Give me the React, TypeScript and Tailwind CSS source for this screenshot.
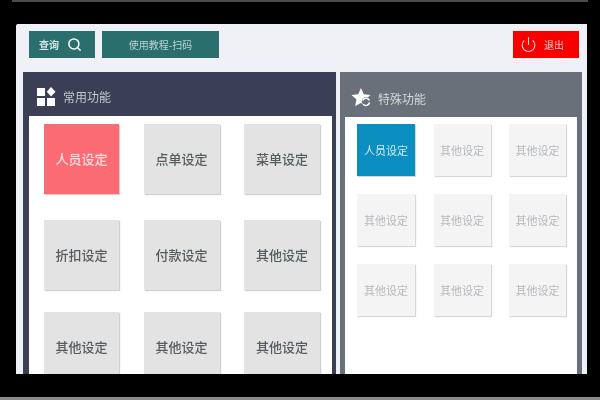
import { Power, Search } from "lucide-react";

const mainItems = ["人员设定", "点单设定", "菜单设定", "折扣设定", "付款设定", "其他设定", "其他设定", "其他设定", "其他设定"];
const specialItems = ["人员设定", "其他设定", "其他设定", "其他设定", "其他设定", "其他设定", "其他设定", "其他设定", "其他设定"];

const font = "font-['Noto_Sans_CJK_SC','Noto_Sans',sans-serif]";

function AppsIcon() {
    return (
        <svg width="19" height="19" viewBox="0 0 19 19" fill="white" className="shrink-0">
            <rect x="0" y="1" width="8" height="8" />
            <rect x="0" y="11" width="8" height="8" />
            <rect x="10" y="11" width="8" height="8" />
            <path d="M14 0l4.500 4.700-4.500 4.700-4.200-4.700z" />
        </svg>
    );
}

function StarIcon() {
    return (
        <svg width="22" height="22" viewBox="0 0 22 22" className="shrink-0">
            <path d="M10 1l2.800 6.200 6.700.7-5 4.500 1.400 6.600L10 16l-5.900 3 1.400-6.600-5-4.500 6.700-.7z" fill="white" />
            <circle cx="15" cy="14.500" r="4.200" fill="#6a7079" />
            <path d="M11.500 13.500a3.800 3.800 0 0 1 7 0M18.500 15.500a3.800 3.800 0 0 1-6.500 1.800" fill="none" stroke="white" strokeWidth="1.500" />
        </svg>
    );
}

export default function App() {
    return (
        <div className={`flex h-[400px] w-[600px] flex-col overflow-hidden bg-black blur-[0.4px] ${font}`}>
            <div className="mx-3 h-0.5 shrink-0 bg-[#4a4a4a]" />
            <div className="flex min-h-0 flex-1 flex-col pl-4 pr-[13px] pt-[22px] pb-[23px]">
                <div className="flex min-h-0 flex-1 flex-col overflow-hidden rounded-tl-[2px] bg-[#f0f1f7]">
                    <div className="flex h-12 shrink-0 items-start gap-[7px] pl-[13px] pr-2 pt-[7px]">
                        <button className="flex h-[27px] w-[66px] items-center gap-2 bg-[#2a6e6e] pl-2.5 text-[10px] font-bold text-[#d5e5e5]">
                            查询
                            <Search size={15} strokeWidth={2.4} className="text-white" />
                        </button>
                        <button className="h-[27px] w-[117px] bg-[#2a6e6e] text-[10px] text-[#b9d3d3]">
                            使用教程-扫码
                        </button>
                        <button className="ml-auto flex h-[27px] w-[66px] items-center gap-[7px] bg-[#f80000] pl-[7px] text-[10px] text-[#ffc9c9]">
                            <Power size={17} strokeWidth={1.5} className="text-[#ffd8d8]" />
                            退出
                        </button>
                    </div>

                    <div className="flex min-h-0 flex-1 gap-1 pl-[7px] pr-[5px]">
                        <section className="flex w-[313px] flex-col bg-[#3a3f55] pl-1.5 pr-1">
                            <div className="flex h-11 shrink-0 items-center gap-[7px] pl-2 pt-1 text-[12px] text-[#c5c8d0]">
                                <AppsIcon />
                                <span className="mt-0.5">常用功能</span>
                            </div>
                            <div className="min-h-0 flex-1 overflow-hidden bg-white pt-2">
                                <div className="grid grid-cols-[75px_76px_76px] grid-rows-[70px_74px_70px] gap-x-[24.500px] gap-y-[22px] pl-[15px]">
                                    {mainItems.map((name, i) => (
                                        <div
                                            key={i}
                                            className={`flex h-[70px] items-center justify-center self-end text-[13px] font-medium shadow-[1px_1px_1px_#d0d0d0] ${i === 0 ? "bg-[#fb6b74] text-[#ffe1e3]" : "bg-[#e3e3e3] text-[#555b5f]"}`}
                                        >
                                            {name}
                                        </div>
                                    ))}
                                </div>
                            </div>
                        </section>

                        <section className="flex w-[242px] flex-col bg-[#6a7079] px-[5px]">
                            <div className="flex h-[45px] shrink-0 items-center gap-[5px] pl-1.5 pt-1.5 text-[12px] text-[#d5d8db]">
                                <StarIcon />
                                <span className="mt-0.5">特殊功能</span>
                            </div>
                            <div className="min-h-0 flex-1 overflow-hidden bg-white pt-[7px]">
                                <div className="grid grid-cols-[58px_57px_57px] gap-x-[18.500px] gap-y-[18px] pl-3">
                                    {specialItems.map((name, i) => (
                                        <div
                                            key={i}
                                            className={`flex h-[52px] items-center justify-center text-[11px] shadow-[1px_1px_1px_#d8d8d8] ${i === 0 ? "bg-[#0b8fc0] text-[#cfeaf4]" : "bg-[#f4f4f4] text-[#b5b9bd]"}`}
                                        >
                                            {name}
                                        </div>
                                    ))}
                                </div>
                            </div>
                        </section>
                    </div>
                </div>
            </div>
            <div className="h-[3px] shrink-0 bg-[#8a8a8a]" />
        </div>
    );
}
